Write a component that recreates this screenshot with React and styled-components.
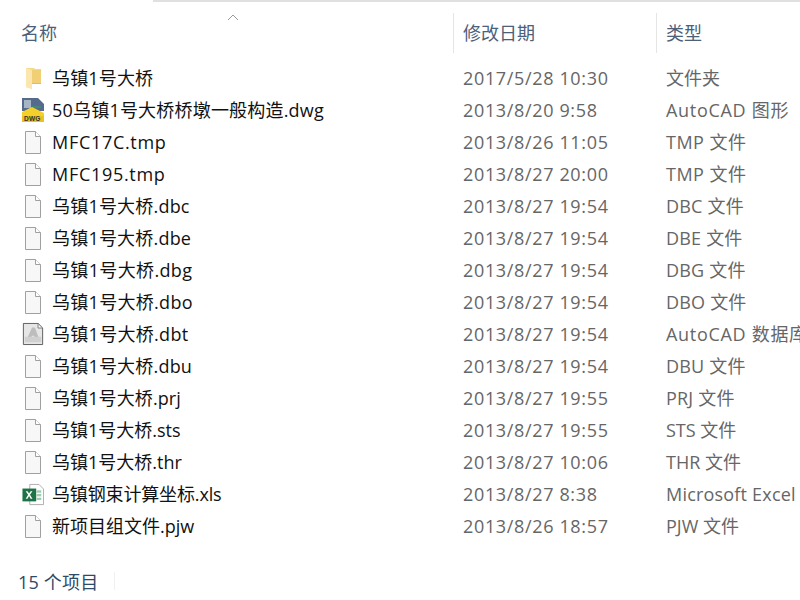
import styled, { createGlobalStyle } from "styled-components";

const GlobalStyle = createGlobalStyle`
  html, body {
    margin: 0;
    padding: 0;
    background: #fff;
    overflow: hidden;
  }
`;

const Window = styled.main`
  width: 800px;
  height: 600px;
  display: flex;
  flex-direction: column;
  overflow: hidden;
  font-family: "Open Sans", "Noto Sans CJK SC", sans-serif;
  font-size: 18px;
`;

const TopEdge = styled.div`
  height: 2px;
  margin-left: 153px;
  background: #e0e0e0;
  flex-shrink: 0;
`;

const Columns = styled.div`
  display: grid;
  grid-template-columns: 453px 203px 144px;
`;

const Header = styled(Columns)`
  position: relative;
  height: 40px;
  margin-top: 11px;
  margin-bottom: 9px;
  color: #4c607a;
  line-height: 40px;
`;

const HeadCell = styled.div`
  padding-left: ${(p) => (p.$first ? "21px" : "9px")};
  border-left: ${(p) => (p.$first ? "0" : "1px solid #e5e5e5")};
  white-space: nowrap;
`;

const SortArrow = styled.svg`
  position: absolute;
  left: 227px;
  top: 1px;
`;

const List = styled.div`
  display: flex;
  flex-direction: column;
  flex: 1;
`;

const Row = styled(Columns)`
  height: 32px;
  line-height: 32px;
  white-space: nowrap;
`;

const NameCell = styled.div`
  display: flex;
  align-items: center;
  gap: 8px;
  padding-left: 22px;
  color: #111;
  letter-spacing: ${(p) => p.$track || 0}px;
`;

const IconBox = styled.span`
  width: 22px;
  height: 24px;
  display: flex;
  align-items: center;
  justify-content: center;
  flex-shrink: 0;
`;

const InfoCell = styled.div`
  padding-left: 10px;
  color: #666;
  overflow: hidden;
  letter-spacing: ${(p) => p.$track || 0}px;
`;

const Footer = styled.footer`
  display: flex;
  align-items: center;
  height: 20px;
  margin-bottom: 9px;
  padding-left: 18px;
  color: #2d4a68;
  white-space: nowrap;
`;

const FooterCount = styled.span`
  letter-spacing: 0.2px;
`;

const FooterSep = styled.span`
  width: 1px;
  height: 18px;
  margin-left: 16px;
  background: #f0f0f0;
`;

const FolderIcon = () => (
  <svg width="15" height="21" viewBox="0 0 15 21">
    <path d="M0 0h8l1 1h6v15H6v5l-6-2z" fill="#f4d98a" />
    <path d="M0 0l6 2v19l-6-2z" fill="#fbe7ae" />
    <path d="M6 2h9v14H6z" fill="#f1cf75" />
    <path d="M6 15h9v1H6z" fill="#e3bd5c" />
  </svg>
);

const FileIcon = () => (
  <svg width="18" height="23" viewBox="0 0 18 23">
    <path d="M1.5.5h10l5 5v17h-15z" fill="#f7f7f7" stroke="#a0a0a0" />
    <path d="M11.5.5v5h5" fill="#fff" stroke="#a0a0a0" />
  </svg>
);

const DwgIcon = () => (
  <svg width="22" height="24" viewBox="0 0 22 24">
    <path d="M0 0h16l6 6v7H0z" fill="#566b8c" />
    <rect x="2" y="2" width="7" height="8" fill="#a5b5c6" />
    <path d="M10 8h9v2h-9z" fill="#3f8a78" />
    <path d="M0 14l10-5 12 6v9H0z" fill="#f3d12a" />
    <path d="M0 18h22v6H0z" fill="#e9c21c" />
    <text x="2" y="23" fontSize="6.5" fontWeight="700" fontFamily="Liberation Sans" fill="#333">DWG</text>
  </svg>
);

const DbtIcon = () => (
  <svg width="24" height="24" viewBox="0 0 24 24">
    <path d="M1.5.5h16l5 5v18h-21z" fill="#e6e6e6" stroke="#555" />
    <path d="M17.5.5v5h5z" fill="#fff" stroke="#777" />
    <path d="M5 18L11 5h3l5 13h-4l-2-4h-2l-2 4z" fill="#bdbdbd" />
    <rect x="3" y="15" width="18" height="6" fill="#d0d0d0" />
  </svg>
);

const ExcelIcon = () => (
  <svg width="24" height="23" viewBox="0 0 24 23">
    <path d="M8.5.5h10l5 5v17h-15z" fill="#fff" stroke="#a9a9a9" />
    <rect x="16" y="7" width="5" height="2.5" fill="#9ccbae" />
    <rect x="16" y="11" width="5" height="2.5" fill="#9ccbae" />
    <rect x="16" y="15" width="5" height="2.5" fill="#9ccbae" />
    <rect x="0.5" y="5" width="15" height="14" fill="#1f7246" />
    <path d="M4 8l2.7 3.8L4 16h2l1.7-2.8L9.4 16h2l-2.7-4.2L11.400 8h-2L7.700 10.500 6 8z" fill="#fff" />
  </svg>
);

const files = [
  { name: "乌镇1号大桥", nameTrack: 0.15, date: "2017/5/28 10:30", type: "文件夹", icon: <FolderIcon /> },
  { name: "50乌镇1号大桥桥墩一般构造.dwg", nameTrack: 0.2, date: "2013/8/20 9:58", type: "AutoCAD 图形", typeTrack: 0.7, icon: <DwgIcon /> },
  { name: "MFC17C.tmp", nameTrack: 0.7, date: "2013/8/26 11:05", type: "TMP 文件", typeTrack: 0.5, icon: <FileIcon /> },
  { name: "MFC195.tmp", nameTrack: 0.7, date: "2013/8/27 20:00", type: "TMP 文件", typeTrack: 0.5, icon: <FileIcon /> },
  { name: "乌镇1号大桥.dbc", nameTrack: 0.2, date: "2013/8/27 19:54", type: "DBC 文件", typeTrack: 0.2, icon: <FileIcon /> },
  { name: "乌镇1号大桥.dbe", nameTrack: 0.2, date: "2013/8/27 19:54", type: "DBE 文件", typeTrack: 0.2, icon: <FileIcon /> },
  { name: "乌镇1号大桥.dbg", nameTrack: 0.35, date: "2013/8/27 19:54", type: "DBG 文件", typeTrack: 0.2, icon: <FileIcon /> },
  { name: "乌镇1号大桥.dbo", nameTrack: 0.3, date: "2013/8/27 19:54", type: "DBO 文件", typeTrack: 0.2, icon: <FileIcon /> },
  { name: "乌镇1号大桥.dbt", nameTrack: 0.3, date: "2013/8/27 19:54", type: "AutoCAD 数据库", typeTrack: 0.7, icon: <DbtIcon /> },
  { name: "乌镇1号大桥.dbu", nameTrack: 0.2, date: "2013/8/27 19:54", type: "DBU 文件", typeTrack: 0.2, icon: <FileIcon /> },
  { name: "乌镇1号大桥.prj", nameTrack: 0.1, date: "2013/8/27 19:55", type: "PRJ 文件", typeTrack: 0.2, icon: <FileIcon /> },
  { name: "乌镇1号大桥.sts", date: "2013/8/27 19:55", type: "STS 文件", icon: <FileIcon /> },
  { name: "乌镇1号大桥.thr", date: "2013/8/27 10:06", type: "THR 文件", icon: <FileIcon /> },
  { name: "乌镇钢束计算坐标.xls", nameTrack: -0.15, date: "2013/8/27 8:38", type: "Microsoft Excel", typeTrack: 0.2, icon: <ExcelIcon /> },
  { name: "新项目组文件.pjw", date: "2013/8/26 18:57", type: "PJW 文件", icon: <FileIcon /> },
];

export default function App() {
  return (
    <Window>
      <GlobalStyle />
      <TopEdge />
      <Header>
        <HeadCell $first>名称</HeadCell>
        <HeadCell>修改日期</HeadCell>
        <HeadCell>类型</HeadCell>
        <SortArrow width="12" height="7" viewBox="0 0 12 7">
          <path d="M1 6l5-5 5 5" fill="none" stroke="#9a9a9a" />
        </SortArrow>
      </Header>
      <List>
        {files.map((f) => (
          <Row key={f.name}>
            <NameCell $track={f.nameTrack}>
              <IconBox>{f.icon}</IconBox>
              {f.name}
            </NameCell>
            <InfoCell $track={0.65}>{f.date}</InfoCell>
            <InfoCell $track={f.typeTrack}>{f.type}</InfoCell>
          </Row>
        ))}
      </List>
      <Footer>
        <FooterCount>15 个项目</FooterCount>
        <FooterSep />
      </Footer>
    </Window>
  );
}
